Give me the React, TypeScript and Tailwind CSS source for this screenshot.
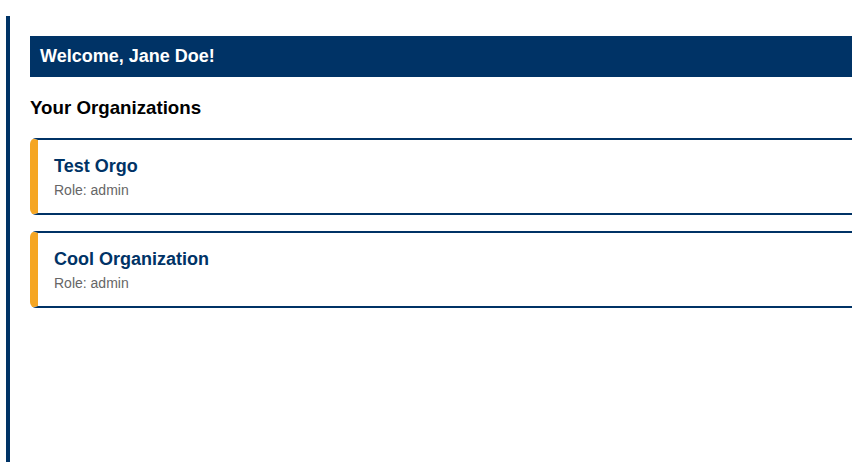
const orgs = [
  { name: 'Test Orgo', role: 'admin' },
  { name: 'Cool Organization', role: 'admin' },
];

export default function App() {
  return (
    <div
      className="h-[462px] overflow-hidden bg-white pt-4 pl-[6px]"
      style={{ fontFamily: '"Liberation Sans", Arial, sans-serif' }}
    >
      <div className="h-full w-[900px] border-l-4 border-[#003366] pl-5 pt-5">
        <div className="bg-[#003366] px-[10px] py-[10px]">
          <h1 className="text-[18px] leading-[21px] font-bold text-white">Welcome, Jane Doe!</h1>
        </div>

        <h2 className="mt-[20px] text-[18.72px] leading-[22px] font-bold text-black">Your Organizations</h2>

        <div className="mt-[19px] flex flex-col gap-[16px]">
          {orgs.map((org) => (
            <div
              key={org.name}
              className="rounded-l-[6px] border-2 border-l-[8px] border-[#003366] border-l-[#f5a623] bg-white pt-[16px] pb-[15px] pl-4 pr-4"
            >
              <h3 className="text-[18px] leading-[21px] font-bold text-[#003366]">{org.name}</h3>
              <p className="mt-[5px] text-[14px] leading-[16px] text-[#666666]">Role: {org.role}</p>
            </div>
          ))}
        </div>
      </div>
    </div>
  );
}
